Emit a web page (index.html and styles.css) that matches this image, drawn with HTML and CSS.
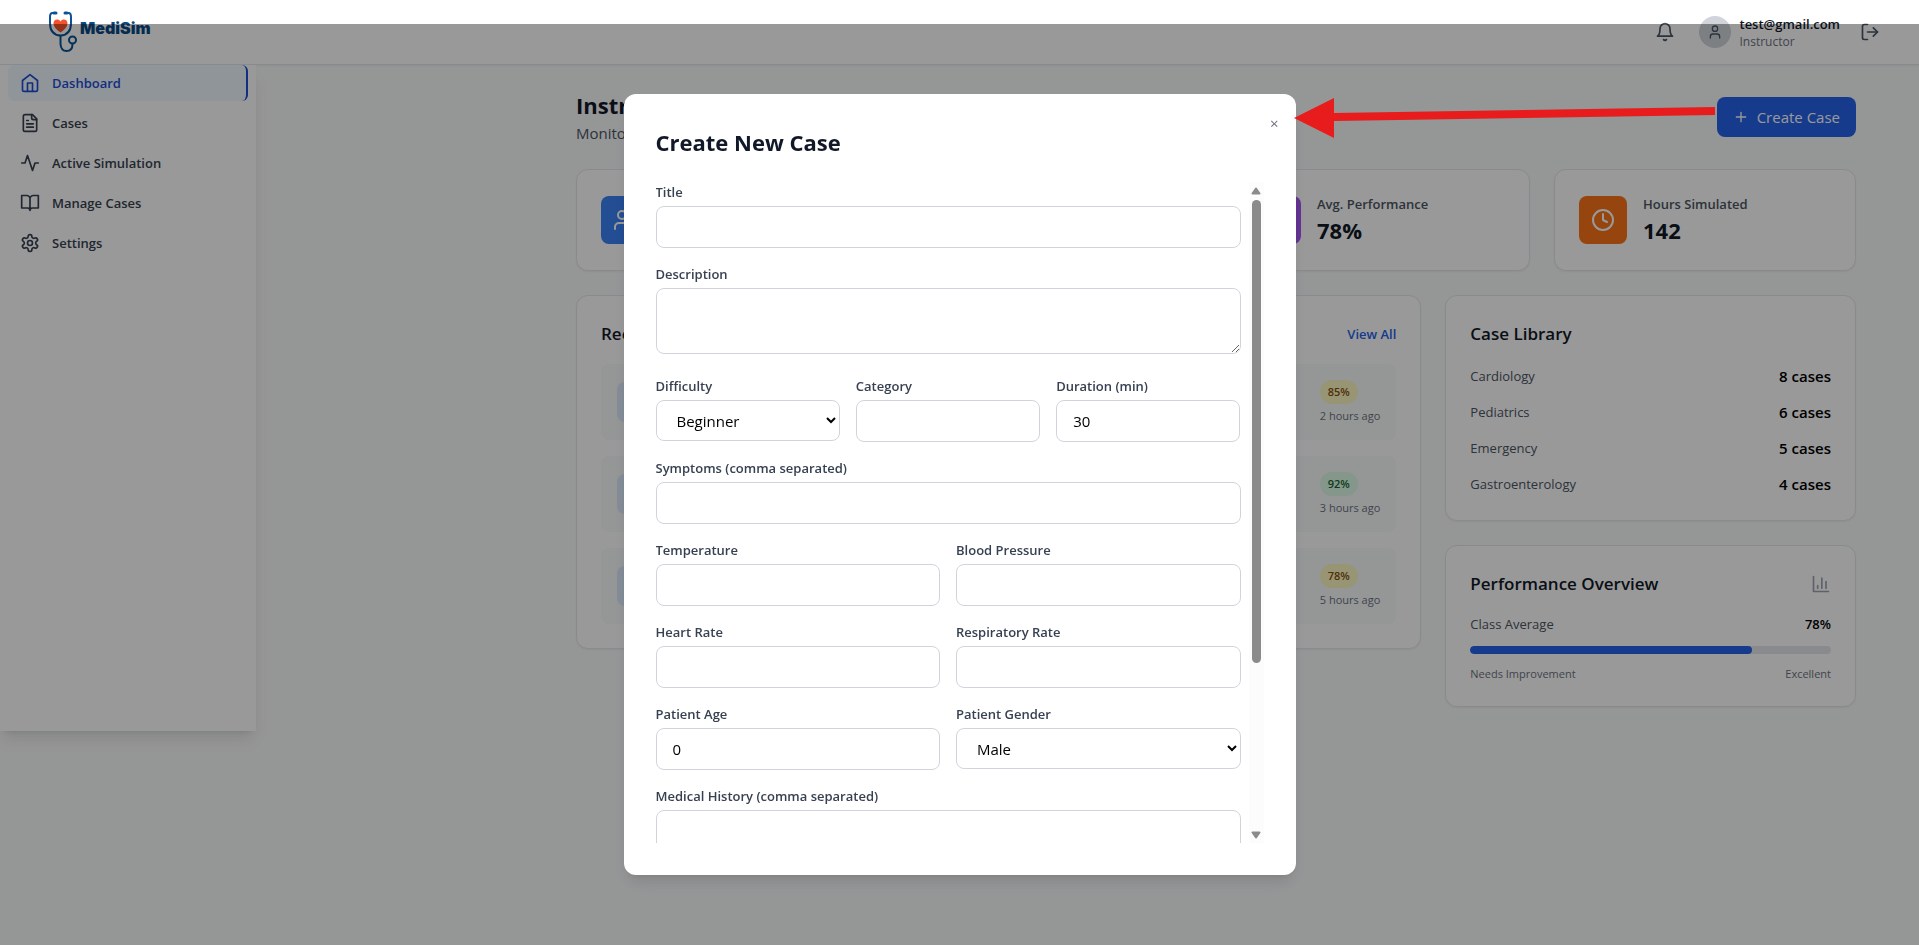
FILE: index.html
```html
<!DOCTYPE html>
<html lang="en">
<head>
<meta charset="utf-8">
<title>MediSim</title>
<link rel="stylesheet" href="styles.css">
</head>
<body>
<svg class="defs" aria-hidden="true">
  <symbol id="user" viewBox="0 0 24 24"><path d="M19 21v-2a4 4 0 0 0-4-4H9a4 4 0 0 0-4 4v2"/><circle cx="12" cy="7" r="4"/></symbol>
  <symbol id="clock" viewBox="0 0 24 24"><circle cx="12" cy="12" r="10"/><path d="M12 6v6l4 2"/></symbol>
</svg>
<header class="topbar">
  <a class="logo" href="#" aria-label="MediSim">
    <svg class="logo-mark" viewBox="0 0 30 42" aria-hidden="true">
      <path class="tube" d="M6 2H4.500Q2 2 2 6V12Q2 24 12.500 24.500Q23 24 23 12V6Q23 2 20.500 2H19"/>
      <path class="tube" d="M12.500 24.500V33Q13 40 18.500 40Q24.500 40 24.500 33"/>
      <circle class="tube" cx="24.500" cy="29" r="3.500"/>
      <path class="ear" d="M6 2H8M17 2H19"/>
      <path class="heart" d="M12.500 21.500C8 18.500 5.500 15.500 5.500 12.500C5.500 8 10.500 7.500 12.500 10.500C14.500 7.500 19.500 8 19.500 12.500C19.500 15.500 17 18.500 12.500 21.500Z"/>
    </svg>
    <span class="logo-text">MediSim</span>
  </a>
  <div class="account">
    <button class="icon-btn bell" aria-label="Notifications"><svg class="icon" viewBox="0 0 24 24"><path d="M6 8a6 6 0 0 1 12 0c0 7 3 9 3 9H3s3-2 3-9"/><path d="M10.300 21a1.940 1.940 0 0 0 3.400 0"/></svg></button>
    <span class="avatar"><svg class="icon small"><use href="#user"/></svg></span>
    <div class="who"><div class="email">test@gmail.com</div><div class="role">Instructor</div></div>
    <button class="icon-btn" aria-label="Log out"><svg class="icon" viewBox="0 0 24 24"><path d="M9 21H5a2 2 0 0 1-2-2V5a2 2 0 0 1 2-2h4"/><path d="m16 17 5-5-5-5"/><path d="M21 12H9"/></svg></button>
  </div>
</header>
<div class="shell">
  <nav class="sidebar">
    <a class="nav active" href="#"><svg class="icon" viewBox="0 0 24 24"><path d="m3 9 9-7 9 7v11a2 2 0 0 1-2 2H5a2 2 0 0 1-2-2z"/><path d="M9 22V12h6v10"/></svg>Dashboard</a>
    <a class="nav" href="#"><svg class="icon" viewBox="0 0 24 24"><path d="M15 2H6a2 2 0 0 0-2 2v16a2 2 0 0 0 2 2h12a2 2 0 0 0 2-2V7Z"/><path d="M14 2v4a2 2 0 0 0 2 2h4M10 9H8M16 13H8M16 17H8"/></svg>Cases</a>
    <a class="nav" href="#"><svg class="icon" viewBox="0 0 24 24"><path d="M22 12h-4l-3 9L9 3l-3 9H2"/></svg>Active Simulation</a>
    <a class="nav" href="#"><svg class="icon" viewBox="0 0 24 24"><path d="M2 3h6a4 4 0 0 1 4 4v14a3 3 0 0 0-3-3H2zM22 3h-6a4 4 0 0 0-4 4v14a3 3 0 0 1 3-3h7z"/></svg>Manage Cases</a>
    <a class="nav" href="#"><svg class="icon" viewBox="0 0 24 24"><path d="M12.220 2h-.440a2 2 0 0 0-2 2v.180a2 2 0 0 1-1 1.730l-.430.250a2 2 0 0 1-2 0l-.150-.080a2 2 0 0 0-2.730.730l-.220.380a2 2 0 0 0 .730 2.730l.150.100a2 2 0 0 1 1 1.720v.510a2 2 0 0 1-1 1.740l-.150.090a2 2 0 0 0-.730 2.730l.220.380a2 2 0 0 0 2.730.730l.150-.080a2 2 0 0 1 2 0l.430.250a2 2 0 0 1 1 1.730V20a2 2 0 0 0 2 2h.440a2 2 0 0 0 2-2v-.180a2 2 0 0 1 1-1.730l.430-.250a2 2 0 0 1 2 0l.150.080a2 2 0 0 0 2.730-.730l.220-.390a2 2 0 0 0-.730-2.730l-.150-.080a2 2 0 0 1-1-1.740v-.500a2 2 0 0 1 1-1.740l.150-.090a2 2 0 0 0 .730-2.730l-.220-.380a2 2 0 0 0-2.730-.730l-.150.080a2 2 0 0 1-2 0l-.430-.250a2 2 0 0 1-1-1.730V4a2 2 0 0 0-2-2z"/><circle cx="12" cy="12" r="3"/></svg>Settings</a>
  </nav>
  <main class="main">
    <div class="page-head">
      <div><h1>Instructor Dashboard</h1><p class="sub">Monitor student progress</p></div>
      <button class="create"><svg class="icon small" viewBox="0 0 24 24"><path d="M5 12h14M12 5v14"/></svg>Create Case</button>
    </div>
    <section class="stats">
      <div class="card stat"><span class="tile blue"><svg class="icon large" viewBox="0 0 24 24"><path d="M16 21v-2a4 4 0 0 0-4-4H6a4 4 0 0 0-4 4v2M22 21v-2a4 4 0 0 0-3-3.870M16 3.130a4 4 0 0 1 0 7.750"/><circle cx="9" cy="7" r="4"/></svg></span></div>
      <div class="card stat"></div>
      <div class="card stat"><span class="tile purple"></span><div><div class="stat-label">Avg. Performance</div><div class="stat-value">78%</div></div></div>
      <div class="card stat"><span class="tile orange"><svg class="icon large"><use href="#clock"/></svg></span><div><div class="stat-label">Hours Simulated</div><div class="stat-value">142</div></div></div>
    </section>
    <div class="panels">
      <section class="card recent">
        <div class="card-head"><h2>Recent Sessions</h2><a class="view" href="#">View All</a></div>
        <div class="sessions">
          <div class="session"><span class="session-icon"></span><div><span class="badge yellow">85%</span><div class="ago">2 hours ago</div></div></div>
          <div class="session"><span class="session-icon"></span><div><span class="badge green">92%</span><div class="ago">3 hours ago</div></div></div>
          <div class="session"><span class="session-icon"></span><div><span class="badge yellow">78%</span><div class="ago">5 hours ago</div></div></div>
        </div>
      </section>
      <div class="side">
        <section class="card">
          <div class="card-head"><h2>Case Library</h2></div>
          <div class="library">
            <div class="row"><span class="muted">Cardiology</span><b>8 cases</b></div>
            <div class="row"><span class="muted">Pediatrics</span><b>6 cases</b></div>
            <div class="row"><span class="muted">Emergency</span><b>5 cases</b></div>
            <div class="row"><span class="muted">Gastroenterology</span><b>4 cases</b></div>
          </div>
        </section>
        <section class="card">
          <div class="card-head"><h2>Performance Overview</h2><svg class="icon chart" viewBox="0 0 24 24"><path d="M3 3v18h18M18 17V9M13 17V5M8 17v-3"/></svg></div>
          <div class="library">
            <div class="row tight"><span class="muted">Class Average</span><b>78%</b></div>
            <div class="bar"><div class="fill" style="width:78%"></div></div>
            <div class="row scale"><span>Needs Improvement</span><span>Excellent</span></div>
          </div>
        </section>
      </div>
    </div>
  </main>
</div>
<div class="overlay">
  <div class="modal" role="dialog" aria-labelledby="modal-title">
    <button class="close" aria-label="Close">×</button>
    <h2 class="modal-title" id="modal-title">Create New Case</h2>
    <div class="scroller">
      <form class="form">
        <div class="field"><label for="title">Title</label><input id="title" type="text"></div>
        <div class="field desc"><label for="desc">Description</label><textarea id="desc" rows="2"></textarea></div>
        <div class="cols three">
          <div class="field"><label for="diff">Difficulty</label><select id="diff"><option>Beginner</option><option>Intermediate</option><option>Advanced</option></select></div>
          <div class="field"><label for="cat">Category</label><input id="cat" type="text"></div>
          <div class="field"><label for="dur">Duration (min)</label><input id="dur" type="text" inputmode="numeric" value="30"></div>
        </div>
        <div class="field"><label for="sym">Symptoms (comma separated)</label><input id="sym" type="text"></div>
        <div class="cols two">
          <div class="field"><label for="temp">Temperature</label><input id="temp" type="text"></div>
          <div class="field"><label for="bp">Blood Pressure</label><input id="bp" type="text"></div>
        </div>
        <div class="cols two">
          <div class="field"><label for="hr">Heart Rate</label><input id="hr" type="text"></div>
          <div class="field"><label for="rr">Respiratory Rate</label><input id="rr" type="text"></div>
        </div>
        <div class="cols two">
          <div class="field"><label for="age">Patient Age</label><input id="age" type="text" inputmode="numeric" value="0"></div>
          <div class="field"><label for="gender">Patient Gender</label><select id="gender"><option>Male</option><option>Female</option></select></div>
        </div>
        <div class="field"><label for="hist">Medical History (comma separated)</label><input id="hist" type="text"></div>
      </form>
      <div class="rail" aria-hidden="true">
        <svg class="arrow" viewBox="0 0 10 8"><path d="M5 1.500 8.500 6.500H1.500z"/></svg>
        <div class="track"><div class="thumb"></div></div>
        <svg class="arrow" viewBox="0 0 10 8"><path d="M5 6.500 8.500 1.500H1.500z"/></svg>
      </div>
    </div>
  </div>
</div>
<svg class="pointer" viewBox="0 0 422 42" aria-hidden="true"><path d="M0 21 40 1V16L421 10V18L40 24V41Z"/></svg>
</body>
</html>
```
FILE: styles.css
```css
* { box-sizing: border-box; }
body {
  margin: 0;
  min-height: 100vh;
  background: #f9fafb;
  color: #000;
  font: 15px/24px "Open Sans", "Noto Sans", sans-serif;
  overflow: hidden;
}
h1, h2, p { margin: 0; }
button, input, select, textarea { font: inherit; color: inherit; }
button { border: 0; padding: 0; background: none; }
a { text-decoration: none; }
.defs { position: absolute; width: 0; height: 0; }
.icon {
  width: 20px; height: 20px; flex: none; display: block;
  fill: none; stroke: currentColor; stroke-width: 2;
  stroke-linecap: round; stroke-linejoin: round;
}
.icon.small { width: 16px; height: 16px; }
.icon.large { width: 24px; height: 24px; }

.topbar {
  display: flex; align-items: center; justify-content: space-between;
  height: 65px; padding: 0 39px 0 48px;
  background: #fff; border-bottom: 1px solid #e5e7eb;
  box-shadow: 0 1px 2px rgba(0, 0, 0, .05);
}
.logo { display: flex; align-items: center; gap: 2px; }
.logo-mark { width: 30px; height: 42px; }
.tube { fill: none; stroke: #0b5394; stroke-width: 2; }
.ear { fill: none; stroke: #0b5394; stroke-width: 3; stroke-linecap: round; }
.heart { fill: #f4512c; }
.logo-text { color: #0a4a86; font: 900 16px/20px Inter, sans-serif; padding-bottom: 8px; }
.account { display: flex; align-items: center; }
.icon-btn { color: #4b5563; }
.bell { margin-right: 24px; }
.avatar {
  display: grid; place-items: center; width: 32px; height: 32px; margin-right: 8px;
  border-radius: 50%; background: #d1d5db; color: #4b5563;
}
.who { margin-right: 20px; }
.email { font-size: 13px; line-height: 20px; font-weight: 600; color: #111827; }
.role { font-size: 12px; line-height: 16px; color: #6b7280; }

.shell { display: flex; align-items: flex-start; }
.sidebar {
  display: flex; flex-direction: column; gap: 4px; flex: none;
  width: 256px; min-height: calc(100vh - 279px); padding: 0 8px;
  background: #fff;
  box-shadow: 0 10px 15px -3px rgba(0, 0, 0, .1), 0 4px 6px -4px rgba(0, 0, 0, .1);
}
.nav {
  display: flex; align-items: center; gap: 12px; height: 36px; padding: 0 12px;
  border-radius: 6px; color: #374151; font-size: 13px; font-weight: 600;
}
.nav.active { background: #f0f9ff; color: #1d4ed8; border-right: 2px solid #1d4ed8; }
.main { flex: 1; padding: 24px 63px 32px 320px; }
.page-head { display: flex; justify-content: space-between; align-items: center; margin-bottom: 24px; }
h1 { font-size: 22px; line-height: 32px; color: #111827; }
.sub { color: #4b5563; }
.create {
  display: flex; align-items: center; gap: 8px; height: 40px; padding: 0 16px;
  border-radius: 8px; background: #2563eb; color: #fff;
}
.card {
  background: #fff; border: 1px solid #e5e7eb; border-radius: 12px; padding: 24px;
  box-shadow: 0 1px 2px rgba(0, 0, 0, .05);
}
.stats { display: grid; grid-template-columns: repeat(4, 1fr); gap: 24px; margin-bottom: 24px; }
.stat { display: flex; align-items: center; gap: 16px; min-height: 102px; }
.tile { display: grid; place-items: center; width: 48px; height: 48px; border-radius: 8px; color: #fff; }
.blue { background: #3b82f6; }
.purple { background: #a855f7; }
.orange { background: #f97316; }
.stat-label { font-size: 13px; line-height: 20px; font-weight: 600; color: #4b5563; }
.stat-value { font-size: 22px; line-height: 32px; font-weight: 700; color: #111827; }
.panels { display: grid; grid-template-columns: repeat(3, 1fr); gap: 24px; align-items: start; }
.recent { grid-column: span 2; }
.side { display: grid; gap: 24px; }
.card-head { display: flex; align-items: center; justify-content: space-between; margin-bottom: 16px; }
h2 { font-size: 17px; line-height: 28px; font-weight: 600; color: #111827; }
.view { font-size: 13px; font-weight: 600; color: #2563eb; }
.sessions { display: grid; gap: 16px; }
.session {
  display: flex; align-items: center; justify-content: space-between;
  padding: 16px; border-radius: 8px; background: #f9fafb;
}
.session-icon { width: 40px; height: 40px; border-radius: 8px; background: #dbeafe; }
.badge {
  display: block; width: fit-content; padding: 4px 8px; margin-bottom: 4px;
  border-radius: 12px; font-size: 11px; line-height: 16px; font-weight: 600;
}
.yellow { background: #fef9c3; color: #854d0e; }
.green { background: #dcfce7; color: #166534; }
.ago { font-size: 11px; line-height: 16px; color: #6b7280; }
.library { display: grid; gap: 12px; }
.row { display: flex; justify-content: space-between; align-items: center; }
.row b { font-weight: 600; }
.muted { font-size: 13px; color: #4b5563; }
.tight, .tight b, .tight .muted { font-size: 13px; line-height: 20px; }
.chart { color: #9ca3af; }
.bar { height: 8px; border-radius: 4px; background: #e5e7eb; overflow: hidden; }
.fill { height: 100%; border-radius: 4px; background: #2563eb; }
.scale { font-size: 11px; line-height: 16px; color: #6b7280; }

.overlay {
  position: fixed; inset: 24px 0 0; display: flex; justify-content: center;
  padding: 70px 16px; background: rgba(0, 0, 0, .4);
}
.modal {
  position: relative; display: flex; flex-direction: column; gap: 24px;
  width: 672px; padding: 32px; border-radius: 12px; background: #fff;
  box-shadow: 0 10px 15px -3px rgba(0, 0, 0, .1), 0 4px 6px -4px rgba(0, 0, 0, .1);
}
.close { position: absolute; top: 17px; right: 17px; color: #6b7280; }
.modal-title { font-size: 22px; line-height: 32px; font-weight: 700; }
.scroller { display: flex; flex: 1; min-height: 0; gap: 8px; }
.form {
  flex: 1; display: flex; flex-direction: column; gap: 16px;
  overflow-y: auto; scrollbar-width: none;
}
.field { display: flex; flex-direction: column; gap: 4px; min-width: 0; }
.desc { margin-bottom: 6px; }
.cols { display: grid; gap: 16px; }
.three { grid-template-columns: repeat(3, 1fr); }
.two { grid-template-columns: repeat(2, 1fr); }
label { font-size: 13px; line-height: 20px; font-weight: 600; color: #374151; }
input, select, textarea {
  width: 100%; height: 42px; margin: 0; padding: 8px 16px;
  border: 1px solid #d1d5db; border-radius: 8px; background: #fff;
}
textarea { height: 66px; resize: vertical; }
select { height: 41px; padding-right: 0; }
.rail {
  display: flex; flex-direction: column; align-items: center; gap: 5px;
  width: 15px; padding: 5px 0 4px; background: #fcfcfc;
}
.arrow { width: 10px; height: 8px; fill: #8b8b8b; stroke: #8b8b8b; stroke-width: 2; stroke-linejoin: round; }
.track { flex: 1; }
.thumb { width: 9px; height: 74%; border-radius: 5px; background: #8b8b8b; }
.pointer { position: absolute; left: 1294px; top: 97px; width: 422px; height: 42px; fill: #e81c1c; }
```
